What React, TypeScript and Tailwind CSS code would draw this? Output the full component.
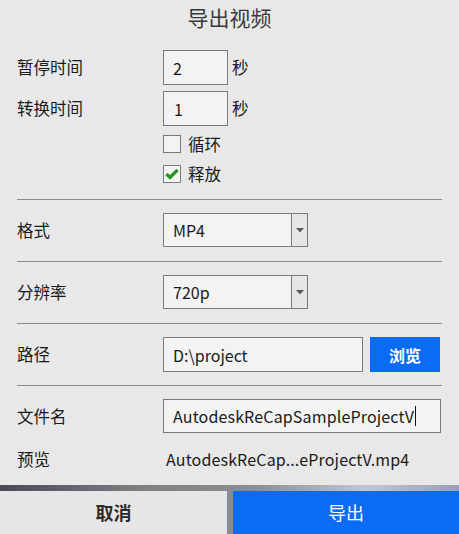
import React from "react";

const font = { fontFamily: '"Noto Sans CJK SC", "Noto Sans", sans-serif' };

function Arrow() {
  return (
    <div className="flex h-full w-[16px] items-center justify-center border-l border-[#7a7a7a] bg-[#e6e6e6]">
      <svg width="8" height="5" viewBox="0 0 8 5">
        <polygon points="0,0 8,0 4,4.5" fill="#5a5a5a" />
      </svg>
    </div>
  );
}

function Divider() {
  return <div className="h-px w-full bg-[#8c8c8c]" />;
}

export default function App() {
  return (
    <div
      className="relative h-[534px] w-[459px] overflow-hidden bg-[linear-gradient(90deg,#4a4854_0%,#7d7f84_30%,#8a8f93_55%,#c3c6cc_80%,#9a9fb4_100%)] text-[#1a1a1a]"
      style={font}
    >
      <div className="flex h-[485px] flex-col bg-[#e8e8e8] px-[17px]">
        <div className="flex h-[38px] items-center justify-center pb-[2px] text-[21px] text-[#3a3a3a]">
          导出视频
        </div>

        <div className="mt-[12px] flex h-[35px] items-center">
          <div className="w-[146px] text-[16.5px]">暂停时间</div>
          <div className="flex h-[35px] w-[65px] items-center border border-[#7a7a7a] bg-[#f3f3f3] pl-[9px] text-[16px]">
            2
          </div>
          <div className="ml-[4px] text-[16.5px]">秒</div>
        </div>
        <div className="mt-[6px] flex h-[35px] items-center">
          <div className="w-[146px] text-[16.5px]">转换时间</div>
          <div className="flex h-[35px] w-[65px] items-center border border-[#7a7a7a] bg-[#f3f3f3] pl-[10px] text-[16px]">
            1
          </div>
          <div className="ml-[4px] text-[16.5px]">秒</div>
        </div>

        <div className="mt-[9px] flex h-[18px] items-center pl-[146px]">
          <div className="h-[18px] w-[18px] border border-[#7a7a7a] bg-[#f3f3f3]" />
          <div className="ml-[7px] text-[16.5px]">循环</div>
        </div>
        <div className="mt-[12px] flex h-[18px] items-center pl-[146px]">
          <div className="flex h-[18px] w-[18px] items-center justify-center border border-[#7a7a7a] bg-[#f3f3f3]">
            <svg width="14" height="12" viewBox="0 0 14 12">
              <path d="M1.5 6 L5 9.4 L12.6 1.8" fill="none" stroke="#23961e" strokeWidth="3.3" strokeLinecap="butt" />
            </svg>
          </div>
          <div className="ml-[7px] text-[16.5px]">释放</div>
        </div>

        <div className="mt-[16px]">
          <Divider />
        </div>

        <div className="mt-[13px] flex h-[34px] items-center">
          <div className="w-[146px] text-[16.5px]">格式</div>
          <div className="flex h-[34px] w-[145px] items-center border border-[#7a7a7a] bg-[#f3f3f3]">
            <div className="flex-1 pl-[9px] text-[16px]">MP4</div>
            <Arrow />
          </div>
        </div>

        <div className="mt-[14px]">
          <Divider />
        </div>

        <div className="mt-[13px] flex h-[34px] items-center">
          <div className="w-[146px] text-[16.5px]">分辨率</div>
          <div className="flex h-[34px] w-[145px] items-center border border-[#7a7a7a] bg-[#f3f3f3]">
            <div className="flex-1 pl-[9px] text-[16px]">720p</div>
            <Arrow />
          </div>
        </div>

        <div className="mt-[14px]">
          <Divider />
        </div>

        <div className="mt-[13px] flex h-[35px] items-center">
          <div className="w-[146px] text-[16.5px]">路径</div>
          <div className="flex h-[35px] w-[200px] items-center border border-[#7a7a7a] bg-[#f3f3f3] pl-[9px] text-[16px]">
            D:\project
          </div>
          <div className="ml-[7px] flex h-[35px] w-[70px] items-center justify-center bg-[#0a6bf4] text-[16px] font-bold text-white">
            浏览
          </div>
        </div>

        <div className="mt-[13px]">
          <Divider />
        </div>

        <div className="mt-[13px] flex h-[34px] items-center">
          <div className="w-[146px] text-[16.5px]">文件名</div>
          <div className="flex h-[34px] w-[278px] items-center border border-[#7a7a7a] bg-[#f3f3f3] pl-[9px] text-[16px] tracking-[0.15px]">
            AutodeskReCapSampleProjectV
            <span className="ml-[1px] h-[20px] w-px bg-[#111]" />
          </div>
        </div>

        <div className="mt-[16px] flex h-[20px] items-center">
          <div className="w-[149px] text-[16.5px]">预览</div>
          <div className="text-[16px] tracking-[0.15px]">AutodeskReCap...eProjectV.mp4</div>
        </div>
      </div>

      <div className="mt-[6px] flex h-[43px] gap-[6px]">
        <div className="flex w-[227px] items-center justify-center bg-[#e6e6e6] text-[18px] font-bold text-[#2b2b2b]">
          取消
        </div>
        <div className="flex flex-1 items-center justify-center bg-[#0a6bf4] text-[18px] font-normal text-white">
          导出
        </div>
      </div>
    </div>
  );
}
